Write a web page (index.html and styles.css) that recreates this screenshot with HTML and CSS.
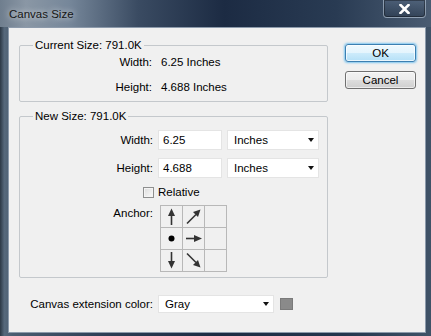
FILE: index.html
```html
<!DOCTYPE html>
<html lang="en">
<head>
    <meta charset="UTF-8">
    <title>Canvas Size</title>
    <link rel="stylesheet" href="styles.css">
</head>
<body>
    <div class="window">
        <!-- Title bar -->
        <div class="titlebar">
            <span class="title">Canvas Size</span>
            <div class="close">
                <svg width="11" height="10" viewBox="0 0 11 10">
                    <path d="M1.5 1 L9.5 9 M9.5 1 L1.5 9" stroke="#fff" stroke-width="2.6" stroke-linecap="square"/>
                </svg>
            </div>
        </div>
        <!-- Dialog body -->
        <div class="client">
            <div class="main">
                <fieldset class="group current">
                    <legend>Current Size: 791.0K</legend>
                    <div class="info-rows">
                        <span class="label">Width:</span><span>6.25 Inches</span>
                        <span class="label">Height:</span><span>4.688 Inches</span>
                    </div>
                </fieldset>
                <fieldset class="group new">
                    <legend>New Size: 791.0K</legend>
                    <div class="field-row">
                        <span class="label">Width:</span>
                        <div class="input">6.25</div>
                        <div class="select unit">Inches<span class="caret"></span></div>
                    </div>
                    <div class="field-row">
                        <span class="label">Height:</span>
                        <div class="input">4.688</div>
                        <div class="select unit">Inches<span class="caret"></span></div>
                    </div>
                    <div class="check-row">
                        <span class="checkbox"></span>Relative
                    </div>
                    <div class="anchor-row">
                        <span class="label">Anchor:</span>
                        <div class="anchor">
                            <div class="cell">
                                <svg width="21" height="21" viewBox="0 0 21 21"><path d="M10.5 19 V8" stroke="#333" stroke-width="1.6"/><path d="M7 10 L10.5 2.5 L14 10 Z" fill="#333"/></svg>
                            </div>
                            <div class="cell">
                                <svg width="21" height="21" viewBox="0 0 21 21"><path d="M4 17.5 L13 8.5" stroke="#333" stroke-width="1.6"/><path d="M10 6 L17.5 3.5 L15 11 Z" fill="#333"/></svg>
                            </div>
                            <div class="cell"></div>
                            <div class="cell">
                                <svg width="21" height="21" viewBox="0 0 21 21"><circle cx="10.5" cy="10.5" r="3" fill="#000"/></svg>
                            </div>
                            <div class="cell">
                                <svg width="21" height="21" viewBox="0 0 21 21"><path d="M3 10.5 H12" stroke="#333" stroke-width="1.6"/><path d="M11 7 L19 10.5 L11 14 Z" fill="#333"/></svg>
                            </div>
                            <div class="cell"></div>
                            <div class="cell">
                                <svg width="21" height="21" viewBox="0 0 21 21"><path d="M10.5 2 V13" stroke="#333" stroke-width="1.6"/><path d="M7 11 L10.5 18.5 L14 11 Z" fill="#333"/></svg>
                            </div>
                            <div class="cell">
                                <svg width="21" height="21" viewBox="0 0 21 21"><path d="M4 3.5 L13 12.5" stroke="#333" stroke-width="1.6"/><path d="M10 15 L17.5 17.5 L15 10 Z" fill="#333"/></svg>
                            </div>
                            <div class="cell"></div>
                        </div>
                    </div>
                </fieldset>
                <div class="ext-row">
                    <span class="label">Canvas extension color:</span>
                    <div class="select ext">Gray<span class="caret"></span></div>
                    <span class="swatch"></span>
                </div>
            </div>
            <div class="buttons">
                <button class="btn ok">OK</button>
                <button class="btn">Cancel</button>
            </div>
        </div>
    </div>
</body>
</html>
```

FILE: styles.css
```css
/* Reset */
* {
    margin: 0;
    padding: 0;
    box-sizing: border-box;
    font-family: "Liberation Sans", Arial, sans-serif;
}
body {
    width: 431px;
    height: 336px;
    overflow: hidden;
    background: linear-gradient(to right, #2c3845 0, #56687b 1%, #4a5c70 3%, #2c3d54 25%, #1c2b42 50%, #24364d 80%, #3f5267 100%);
    color: #000;
    font-size: 11.5px;
}

/* Title bar */
.titlebar {
    height: 27px;
    display: flex;
    justify-content: space-between;
    align-items: flex-start;
    padding-left: 9px;
    padding-right: 5px;
    background: linear-gradient(to right, #6f7e8e 0, #8a97a5 6%, #76879a 16%, #3a4b62 32%, #1c2b43 52%, #293b53 78%, #4a5c72 100%);
}
.title {
    padding-top: 7px;
    line-height: 14px;
    font-size: 11.5px;
    color: #151515;
    text-shadow: 0 0 6px rgba(255, 255, 255, 0.9);
}
.close {
    width: 43px;
    height: 18px;
    display: flex;
    align-items: center;
    justify-content: center;
    border: 1px solid rgba(200, 215, 230, 0.55);
    border-top: none;
    border-radius: 0 0 4px 4px;
    background: linear-gradient(to bottom, rgba(90, 110, 135, 0.5), rgba(40, 55, 75, 0.6));
    box-shadow: inset 0 0 0 1px rgba(0, 0, 0, 0.35);
}

/* Dialog body */
.client {
    margin-left: 8px;
    width: 418px;
    height: 306px;
    display: flex;
    padding-left: 10px;
    background-color: #f0f0f0;
    border: 1px solid #8c9aab;
}
.main {
    width: 309px;
    padding-top: 10px;
}
.label {
    text-align: right;
}

/* Group boxes */
.group {
    width: 309px;
    border: 1px solid #c4c8cc;
    border-radius: 2px;
}
.group legend {
    margin-left: 13px;
    padding: 0 2px;
    line-height: 14px;
}
.current {
    padding-bottom: 4px;
}
.info-rows {
    display: grid;
    grid-template-columns: 132px auto;
    column-gap: 9px;
    row-gap: 5px;
    line-height: 20px;
}
.new {
    margin-top: 7px;
    padding-top: 7px;
    padding-bottom: 5px;
}
.field-row {
    display: flex;
    align-items: center;
    height: 20px;
    margin-bottom: 8px;
}
.field-row .label {
    width: 133px;
}
.input {
    width: 64px;
    height: 20px;
    margin-left: 5px;
    padding-left: 4px;
    line-height: 18px;
    background-color: #fff;
    border: 1px solid #e4e4e4;
}
.select {
    display: flex;
    align-items: center;
    justify-content: space-between;
    height: 20px;
    padding-left: 6px;
    padding-right: 4px;
    background-color: #fff;
    border: 1px solid #e4e4e4;
}
.unit {
    width: 92px;
    margin-left: 5px;
}
.caret {
    width: 0;
    height: 0;
    border-left: 3.5px solid transparent;
    border-right: 3.5px solid transparent;
    border-top: 4px solid #111;
}
.check-row {
    display: flex;
    align-items: center;
    height: 16px;
    margin-top: -2px;
    padding-left: 123px;
}
.checkbox {
    width: 11px;
    height: 11px;
    margin-right: 4px;
    border: 1px solid #8e8f8f;
    background: linear-gradient(135deg, #dcdcdc, #fbfbfb);
    box-shadow: inset 0 0 0 1px #f4f4f4;
}
.anchor-row {
    display: flex;
    align-items: flex-start;
    margin-top: 5px;
}
.anchor-row .label {
    width: 133px;
    line-height: 16px;
}
.anchor {
    margin-left: 7px;
    display: grid;
    grid-template-columns: repeat(3, 21px);
    grid-template-rows: repeat(3, 21px);
    gap: 1px;
    padding: 1px;
    background-color: #b8b8b8;
}
.cell {
    background-color: #f0f0f0;
}
.cell svg {
    display: block;
}

/* Extension colour row */
.ext-row {
    display: flex;
    align-items: center;
    margin-top: 17px;
}
.ext-row .label {
    width: 134px;
}
.ext {
    width: 116px;
    height: 18px;
    margin-left: 5px;
}
.swatch {
    width: 13px;
    height: 12px;
    margin-left: 6px;
    background-color: #8a8a8a;
    border: 1px solid #7a7a7a;
}

/* Buttons */
.buttons {
    display: flex;
    flex-direction: column;
    gap: 9px;
    margin-left: 17px;
    padding-top: 16px;
}
.btn {
    width: 71px;
    height: 18px;
    font-size: 11.5px;
    color: #000;
    border: 1px solid #707070;
    border-radius: 3px;
    background: linear-gradient(to bottom, #f2f2f2 0, #ebebeb 50%, #dddddd 51%, #cfcfcf 100%);
    box-shadow: inset 0 0 0 1px rgba(255, 255, 255, 0.6);
}
.ok {
    border-color: #3c7fb1;
    background: linear-gradient(to bottom, #f0f9fe 0, #e4f4fd 50%, #cdebfb 51%, #b5e0f7 100%);
    box-shadow: 0 0 2px 1px rgba(80, 180, 240, 0.7), inset 0 0 0 1px rgba(255, 255, 255, 0.7);
}
```
